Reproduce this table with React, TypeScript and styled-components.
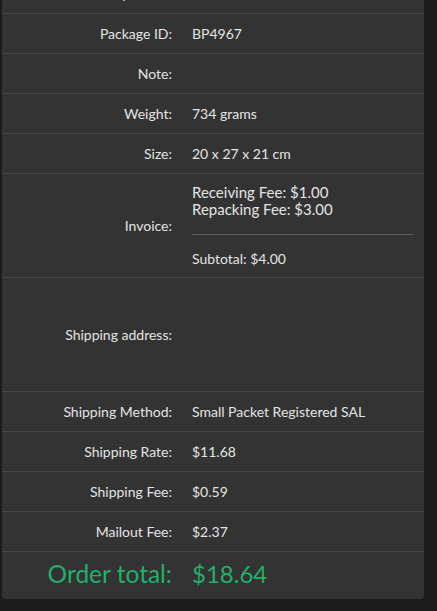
import React from "react";
import styled, { createGlobalStyle } from "styled-components";

const Global = createGlobalStyle`
  html, body { margin: 0; padding: 0; background: #1c1c1c; }
  body { font-family: Lato, "Open Sans", sans-serif; color: #e4e4e4; overflow: hidden; }
`;

const Page = styled.div`
  width: 437px;
  height: 611px;
  overflow: hidden;
  background: #1c1c1c;
`;

const Panel = styled.div`
  margin: -26px 0 0 2px;
  width: 422px;
  background: #333333;
  border-radius: 0 0 4px 4px;
`;

const Row = styled.div<{ $min?: number; $padBottom?: number }>`
  display: grid;
  grid-template-columns: 170px 1fr;
  column-gap: 20px;
  align-items: center;
  box-sizing: border-box;
  min-height: ${(p) => p.$min ?? 40}px;
  padding-bottom: ${(p) => p.$padBottom ?? 0}px;
  border-bottom: 1px solid #474747;
  font-size: 14px;
  &:last-child { border-bottom: none; }
`;

const Label = styled.div<{ $big?: boolean }>`
  text-align: right;
  font-size: ${(p) => (p.$big ? "24.5px" : "14px")};
  line-height: ${(p) => (p.$big ? "28px" : "20px")};
  color: ${(p) => (p.$big ? "#22b06b" : "#e4e4e4")};
`;

const Value = styled.div<{ $big?: boolean }>`
  padding-right: 11px;
  font-size: ${(p) => (p.$big ? "24px" : "14px")};
  line-height: ${(p) => (p.$big ? "28px" : "20px")};
  color: ${(p) => (p.$big ? "#22b06b" : "#e4e4e4")};
`;

const Invoice = styled.div`
  padding: 10px 11px 8px 0;
`;

const FeeLine = styled.div`
  font-size: 15px;
  line-height: 17px;
`;

const Divider = styled.hr`
  border: none;
  border-top: 1px solid #5a5a5a;
  margin: 16px 0 14px 0;
`;

const Subtotal = styled.div`
  font-size: 14px;
  line-height: 20px;
`;

const rows: [string, string][] = [
  ["Package ID:", "BP4967"],
  ["Note:", ""],
  ["Weight:", "734 grams"],
  ["Size:", "20 x 27 x 21 cm"],
];

const rows2: [string, string][] = [
  ["Shipping Method:", "Small Packet Registered SAL"],
  ["Shipping Rate:", "$11.68"],
  ["Shipping Fee:", "$0.59"],
  ["Mailout Fee:", "$2.37"],
];

export default function App() {
  return (
    <Page>
      <Global />
      <Panel>
        <Row>
          <Label>Delivery status:</Label>
          <Value></Value>
        </Row>
        {rows.map(([l, v]) => (
          <Row key={l}>
            <Label>{l}</Label>
            <Value>{v}</Value>
          </Row>
        ))}
        <Row>
          <Label>Invoice:</Label>
          <Invoice>
            <FeeLine>Receiving Fee: $1.00</FeeLine>
            <FeeLine>Repacking Fee: $3.00</FeeLine>
            <Divider />
            <Subtotal>Subtotal: $4.00</Subtotal>
          </Invoice>
        </Row>
        <Row $min={114}>
          <Label>Shipping address:</Label>
          <Value></Value>
        </Row>
        {rows2.map(([l, v]) => (
          <Row key={l}>
            <Label>{l}</Label>
            <Value>{v}</Value>
          </Row>
        ))}
        <Row $min={47} $padBottom={4}>
          <Label $big>Order total:</Label>
          <Value $big>$18.64</Value>
        </Row>
      </Panel>
    </Page>
  );
}
